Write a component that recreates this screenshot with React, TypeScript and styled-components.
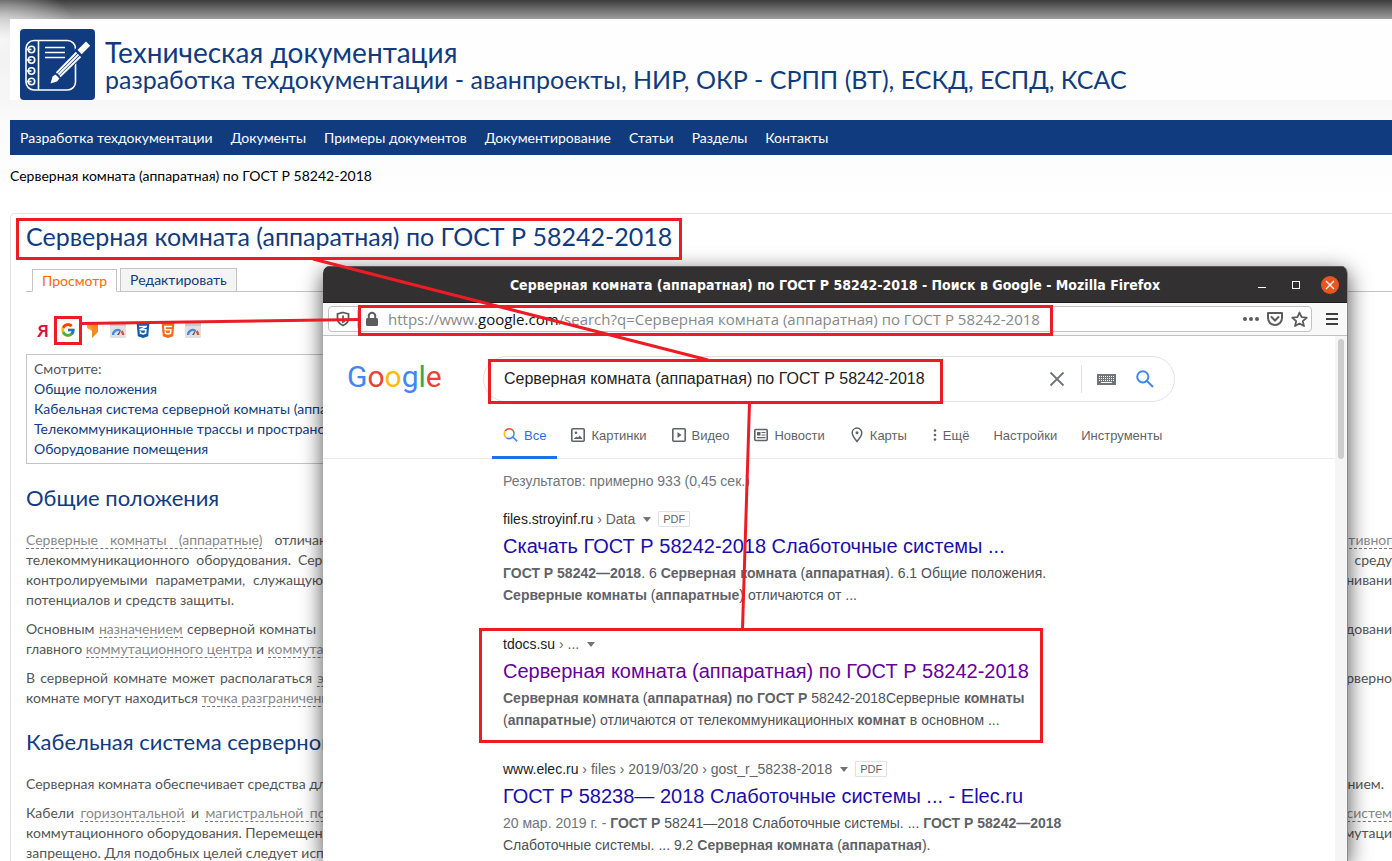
import React from 'react';
import styled, { createGlobalStyle, css } from 'styled-components';
import { FcGoogle } from 'react-icons/fc';
import { FaCss3Alt, FaHtml5 } from 'react-icons/fa';

const navy = '#113b7f';
const site = '"Trebuchet MS", Lato, "Noto Sans", sans-serif';
const arial = '"Liberation Sans", Arial, sans-serif';
const ubuntu = '"Open Sans", "Noto Sans", sans-serif';

const Global = createGlobalStyle`
  * { box-sizing: border-box; }
  body { margin: 0; background: #fff; }
  h1, h2, h3, p, ul { margin: 0; padding: 0; font-weight: 400; list-style: none; }
  a { text-decoration: none; color: inherit; }
  button { border: 0; padding: 0; background: none; font: inherit; color: inherit; display: flex; align-items: center; justify-content: center; }
  svg { display: block; }
`;

const Screen = styled.div`
  position: relative;
  height: 100vh;
  overflow: hidden;
  font-family: ${site};
  font-size: 14px;
  color: #555;
`;

/* ---------- documentation site ---------- */

const Site = styled.div`
  min-height: 100%;
  padding: 19px 0 0 10px;
  background:
    radial-gradient(ellipse 80px 60px at 0 40px, rgba(255, 255, 255, 0.8), rgba(255, 255, 255, 0)),
    linear-gradient(#3c3c3c, #9e9e9e 19px, #d8d8d8 40px, #f3f3f3 80px, #fafafa 120px, #fff 200px);
`;

const SiteHeader = styled.header`
  display: flex;
  gap: 10px;
  height: 81px;
  padding: 10px 0 0 10px;
  background: #fefefe;
`;

const SiteLogo = styled.a`
  flex: none;
  width: 75px;
  height: 71px;
  border-radius: 4px;
  background: ${navy};
`;

const SiteName = styled.div`
  padding-top: 9px;
  color: ${navy};
  white-space: nowrap;
`;

const NameTop = styled.div`
  font-size: 28px;
  line-height: 28px;
`;

const NameBottom = styled.div`
  font-size: 25px;
  line-height: 26px;
`;

const Nav = styled.nav`
  display: flex;
  align-items: center;
  gap: 18px;
  height: 35px;
  margin-top: 20px;
  padding: 0 10px;
  background: ${navy};
  color: #fff;
  white-space: nowrap;
`;

const Crumb = styled.div`
  padding: 11px 0;
  line-height: 20px;
  color: #000;
`;

const Article = styled.main`
  margin-top: 16px;
  padding: 7px 0 0 15px;
  border: 1px solid #e2e2e2;
  border-right: 0;
  border-radius: 5px 0 0 0;
`;

const Title = styled.h1`
  font-size: 25px;
  line-height: 30px;
  color: ${navy};
`;

const Tabs = styled.div`
  display: flex;
  align-items: flex-end;
  gap: 3px;
  margin-top: 17px;
  padding-left: 6px;
  border-bottom: 1px solid #c4c4c4;
`;

const Tab = styled.a<{ $active?: boolean }>`
  height: 23px;
  padding: 0 9px;
  margin-bottom: ${p => (p.$active ? '-1px' : '0')};
  border: 1px solid #c4c4c4;
  border-bottom: ${p => (p.$active ? '1px solid #fff' : '0')};
  background: ${p => (p.$active ? '#fff' : '#f4f4f4')};
  color: ${p => (p.$active ? '#ff6a00' : navy)};
  line-height: 22px;
`;

const Checkers = styled.div`
  display: flex;
  gap: 9px;
  height: 16px;
  margin-top: 30px;
  padding-left: 9px;
`;

const Checker = styled.a`
  display: flex;
  align-items: center;
  justify-content: center;
  width: 16px;
  height: 16px;
  font-size: 17px;
  font-weight: 700;
  color: #d6123c;
`;

const Contents = styled.nav`
  width: 60%;
  margin-top: 16px;
  padding: 4px 7px;
  border: 1px solid #c4c4c4;
  line-height: 20px;
  white-space: nowrap;
  a { display: block; color: ${navy}; }
`;

const Heading = styled.h2`
  margin: 19px 0 17px;
  font-size: 22px;
  line-height: 30px;
  color: ${navy};
`;

const Paragraph = styled.div`
  margin-bottom: 9px;
  line-height: 20px;
`;

const Line = styled.div`
  display: flex;
  justify-content: space-between;
  height: 20px;
  white-space: nowrap;
`;

const LineStart = styled.div<{ $width?: number }>`
  ${p => p.$width && css`
    width: ${p.$width}px;
    text-align: justify;
    text-align-last: justify;
  `}
`;

const LineEnd = styled.div<{ $inset?: boolean }>`
  padding-right: ${p => (p.$inset ? '8px' : '0')};
`;

const Term = styled.a`
  border-bottom: 1px dashed #777;
  color: #888;
`;

/* ---------- browser window ---------- */

const Win = styled.section`
  position: absolute;
  top: 266px;
  left: 323px;
  right: 44px;
  bottom: 0;
  display: flex;
  flex-direction: column;
  border-right: 1px solid #8a8a8a;
  border-radius: 7px 7px 0 0;
  background: #fff;
  box-shadow: 0 6px 22px rgba(0, 0, 0, 0.7);
  overflow: hidden;
`;

const TitleBar = styled.header`
  display: grid;
  grid-template-columns: 1fr auto 1fr;
  align-items: center;
  flex: none;
  height: 37px;
  border-top: 1px solid #5a5858;
  border-bottom: 1px solid #1d1a1c;
  background: #333031;
  color: #fff;
  font: 700 14px "DejaVu Sans Condensed", ${ubuntu};
`;

const WinTitle = styled.span`
  grid-column: 2;
  white-space: nowrap;
`;

const WinButtons = styled.div`
  display: flex;
  justify-content: flex-end;
  align-items: center;
  gap: 16px;
  padding-right: 8px;
`;

const CloseButton = styled.button`
  width: 18px;
  height: 18px;
  border-radius: 9px;
  background: #e95420;
`;

const Toolbar = styled.div`
  display: flex;
  align-items: center;
  flex: none;
  height: 33px;
  padding: 0 9px 0 5px;
  gap: 14px;
  border-bottom: 1px solid #c2c2c2;
  background: #f8f8f8;
`;

const Address = styled.div`
  display: flex;
  align-items: center;
  flex: 1;
  height: 26px;
  padding: 0 3px 0 7px;
  border: 1px solid #c2c2c2;
  border-radius: 4px;
  background: #fff;
  color: #888;
`;

const Rule = styled.i`
  width: 1px;
  height: 18px;
  margin: 0 7px;
  background: #ccc;
`;

const Url = styled.div`
  flex: 1;
  margin-left: 9px;
  font: 15px ${ubuntu};
  white-space: nowrap;
  b { font-weight: 400; color: #111; }
`;

const AddressActions = styled.div`
  display: flex;
  gap: 8px;
`;

const Viewport = styled.div`
  display: flex;
  flex: 1;
  min-height: 0;
  overflow: hidden;
  font-family: ${arial};
`;

const Page = styled.div`
  flex: 1;
  min-width: 0;
`;

const Scrollbar = styled.div`
  flex: none;
  width: 12px;
  padding: 3px;
  background: #f5f5f5;
  &::before {
    content: '';
    display: block;
    height: 120px;
    border-radius: 3px;
    background: #cdcdcd;
  }
`;

const SearchHead = styled.header`
  display: flex;
  align-items: flex-start;
  padding: 20px 0 0 24px;
`;

const Wordmark = styled.a`
  flex: none;
  width: 136px;
  padding-top: 3px;
  font: 400 30px/36px Roboto, sans-serif;
`;

const Letter = styled.span<{ $c: string }>`
  color: ${p => p.$c};
`;

const SearchBox = styled.form`
  display: flex;
  align-items: center;
  width: 692px;
  height: 46px;
  padding: 0 20px;
  border: 1px solid #dfe1e5;
  border-radius: 23px;
`;

const Query = styled.input`
  flex: 1;
  min-width: 0;
  padding: 0;
  border: 0;
  outline: 0;
  background: none;
  color: #222;
  font: 16px ${arial};
`;

const SearchRule = styled.i`
  width: 1px;
  height: 28px;
  margin: 0 15px 0 16px;
  background: #dfe1e5;
`;

const SearchIcons = styled.div`
  display: flex;
  gap: 20px;
`;

const Filters = styled.nav`
  display: flex;
  gap: 2px;
  height: 57px;
  padding: 10px 0 0 169px;
  border-bottom: 1px solid #ebebeb;
`;

const Filter = styled.a<{ $active?: boolean }>`
  display: flex;
  align-items: center;
  gap: 5px;
  height: 47px;
  padding: 2px 11px 0;
  border-bottom: 3px solid ${p => (p.$active ? '#1a73e8' : 'transparent')};
  color: ${p => (p.$active ? '#1a73e8' : '#5f6368')};
  font-size: 13px;
  white-space: nowrap;
`;

const Results = styled.div`
  padding-left: 180px;
  white-space: nowrap;
`;

const Stats = styled.div`
  padding: 12px 0 17px;
  line-height: 20px;
  color: #70757a;
`;

const Result = styled.article`
  margin-bottom: 27px;
`;

const Cite = styled.div`
  display: flex;
  align-items: center;
  height: 22px;
  color: #5f6368;
  b { font-weight: 400; color: #202124; }
`;

const Caret = styled.i`
  margin: 0 7px 0 8px;
  border: 4px solid transparent;
  border-top: 5px solid #70757a;
  border-bottom: 0;
`;

const Badge = styled.span`
  padding: 0 4px;
  border: 1px solid #dfe1e5;
  border-radius: 1px;
  color: #5f6368;
  font-size: 11px;
  line-height: 14px;
`;

const ResultTitle = styled.h3<{ $visited?: boolean }>`
  font-size: 20px;
  line-height: 32px;
  color: ${p => (p.$visited ? '#660099' : '#1a0dab')};
`;

const Snippet = styled.p`
  line-height: 22px;
  color: #4d5156;
  b { color: #5f6368; }
`;

const Muted = styled.span`
  color: #70757a;
`;

/* ---------- red annotations ---------- */

const Marks = styled.svg`
  position: absolute;
  top: 0;
  left: 0;
  width: 100%;
  height: 100%;
  pointer-events: none;
  fill: none;
  stroke: #ed1c24;
  stroke-width: 3;
`;

/* ---------- icons ---------- */

const NotebookIcon = () => (
  <svg width="75" height="71" viewBox="0 0 75 71" fill="none" stroke="#fff" strokeWidth="1.6">
    <rect x="6" y="11.500" width="49.500" height="49.500" rx="8" />
    <path d="M18.500 11.500v49.500" />
    <path d="M25 18.500h20M25 23.500h20M25 28.500h20" />
    {[20.5, 31, 42, 52.5].map(y => (
      <g key={y}>
        <circle cx="11.500" cy={y} r="4.600" fill={navy} stroke="none" />
        <circle cx="11.500" cy={y} r="3.200" />
        <path d={`M6.500 ${y}h5`} />
      </g>
    ))}
    <path d="M60 17l5-4.500 5 4.500-5.500 6.500L38.500 50.500 31 54l1.500-8z" fill={navy} stroke={navy} strokeWidth="3" />
    <path d="M57.500 21l8.500-8.500 4.200 4.200-8.500 8.500z" fill="#fff" stroke="none" />
    <path d="M56.500 23.500L36.500 44M60.500 27.500L40 47.500M58.500 25.500L38.500 45.500" strokeWidth="1.800" />
    <path d="M35.500 45.500l4 4-2.500 3-6.500 2 2-7z" fill="#fff" stroke="none" />
  </svg>
);

const GaugeIcon = () => (
  <svg width="16" height="16" viewBox="0 0 16 16" fill="none">
    <rect width="16" height="16" rx="1" fill="#e1e1e1" />
    <rect width="16" height="4" fill="#c9c9c9" />
    <path d="M3 13a5 5 0 0 1 7-4.700" stroke="#4285f4" strokeWidth="2.400" />
    <path d="M11.500 9.200A5 5 0 0 1 13.200 13" stroke="#e04a3f" strokeWidth="2.400" />
    <path d="M7 13l3.500-5 .5.5L9 13z" fill="#555" />
  </svg>
);

const OrangeIcon = () => (
  <svg width="16" height="16" viewBox="0 0 16 16">
    <path d="M2 2l7 3v5L2 6z" fill="#f9a13a" />
    <path d="M2 2l11-1v9l-6 6V6z" fill="#f28c1e" />
  </svg>
);

const ShieldIcon = () => (
  <svg width="14" height="16" viewBox="0 0 14 16" fill="none" stroke="#5c5c5c" strokeWidth="1.800">
    <path d="M7 1.500L12.500 3v4.500c0 3-2 5.500-5.500 7-3.500-1.500-5.500-4-5.500-7V3z" />
    <path d="M7 4.500v6.500c1.800-.8 2.500-2 2.500-3.500" />
  </svg>
);

const LockIcon = () => (
  <svg width="14" height="16" viewBox="0 0 14 16" fill="none">
    <rect x="1" y="7" width="12" height="8" rx="1.500" fill="#5c5c5c" />
    <path d="M3.800 8V5a3.200 3.200 0 0 1 6.400 0v3" stroke="#5c5c5c" strokeWidth="2" />
  </svg>
);

const ClearIcon = () => (
  <svg width="16" height="16" viewBox="0 0 16 16" stroke="#70757a" strokeWidth="1.800">
    <path d="M1.500 1.500l13 13M14.500 1.500l-13 13" />
  </svg>
);

const KeyboardIcon = () => (
  <svg width="19" height="16" viewBox="0 0 19 16">
    <rect y="3" width="19" height="11" fill="#70757a" />
    <path d="M2 5.500h15M2 7.500h15M2 9.500h15" stroke="#fff" strokeWidth="1" strokeDasharray="1 1" />
    <path d="M4 11.500h11" stroke="#fff" />
  </svg>
);

const Magnifier = () => (
  <svg width="18" height="18" viewBox="0 0 18 18" fill="none" stroke="#4285f4" strokeWidth="2">
    <circle cx="6.800" cy="6.800" r="5.600" />
    <path d="M11 11l6 6" />
  </svg>
);

const ColorMagnifier = () => (
  <svg width="16" height="16" viewBox="0 0 16 16" fill="none" strokeWidth="1.600">
    <path d="M2.200 4A5 5 0 0 1 9.900 3.200" stroke="#ea4335" />
    <path d="M9.900 3.200A5 5 0 0 1 10.900 8" stroke="#34a853" />
    <path d="M2.200 4A5 5 0 0 0 3.400 10.800" stroke="#fbbc05" />
    <path d="M3.400 10.800A5 5 0 0 0 10.900 8M9.800 10l4.400 4.400" stroke="#4285f4" />
  </svg>
);

const Frame = ({ children }: { children: React.ReactNode }) => (
  <svg width="16" height="16" viewBox="0 0 16 16" fill="none" stroke="#5f6368" strokeWidth="1.600">
    <rect x="1.800" y="1.800" width="12.400" height="12.400" rx="1" />
    {children}
  </svg>
);

const ImageIcon = () => (
  <Frame>
    <path d="M3.500 12h9l-2.700-3.500L8 10.500 6.500 9.500z" fill="#5f6368" stroke="none" />
    <circle cx="6" cy="5.800" r="1.300" fill="#5f6368" stroke="none" />
  </Frame>
);
const VideoIcon = () => (
  <Frame><path d="M6.500 5v6l4-3z" fill="#5f6368" stroke="none" /></Frame>
);
const NewsIcon = () => (
  <svg width="16" height="16" viewBox="0 0 16 16" fill="none" stroke="#5f6368" strokeWidth="1.600">
    <rect x="1.800" y="2.500" width="12.400" height="11" rx="1" />
    <rect x="4" y="5" width="3.500" height="3.500" fill="#5f6368" stroke="none" />
    <path d="M8.500 5.500h4M8.500 8h4M4 10.700h8.500" strokeWidth="1.200" />
  </svg>
);
const PinIcon = () => (
  <svg width="16" height="16" viewBox="0 0 16 16" fill="none" stroke="#5f6368" strokeWidth="1.500">
    <path d="M8 14.500C5 11 3.200 8.500 3.200 5.800a4.800 4.800 0 0 1 9.600 0C12.800 8.500 11 11 8 14.500z" />
    <circle cx="8" cy="5.800" r="1.500" fill="#5f6368" stroke="none" />
  </svg>
);
const MoreIcon = () => (
  <svg width="7" height="16" viewBox="0 0 7 16" fill="#5f6368">
    <circle cx="4" cy="3.500" r="1.300" /><circle cx="4" cy="8" r="1.300" /><circle cx="4" cy="12.500" r="1.300" />
  </svg>
);

const filters: { label: string; icon?: React.ReactNode; active?: boolean }[] = [
  { label: 'Все', icon: <ColorMagnifier />, active: true },
  { label: 'Картинки', icon: <ImageIcon /> },
  { label: 'Видео', icon: <VideoIcon /> },
  { label: 'Новости', icon: <NewsIcon /> },
  { label: 'Карты', icon: <PinIcon /> },
  { label: 'Ещё', icon: <MoreIcon /> },
  { label: 'Настройки' },
  { label: 'Инструменты' },
];

const letters: [string, string][] = [
  ['G', '#4285f4'], ['o', '#ea4335'], ['o', '#fbbc05'], ['g', '#4285f4'], ['l', '#34a853'], ['e', '#ea4335'],
];

const SitePage = () => (
  <Site>
    <SiteHeader>
      <SiteLogo href="#" aria-label="Техническая документация"><NotebookIcon /></SiteLogo>
      <SiteName>
        <NameTop>Техническая документация</NameTop>
        <NameBottom>разработка техдокументации - аванпроекты, НИР, ОКР - СРПП (ВТ), ЕСКД, ЕСПД, КСАС</NameBottom>
      </SiteName>
    </SiteHeader>
    <Nav>
      {['Разработка техдокументации', 'Документы', 'Примеры документов', 'Документирование', 'Статьи', 'Разделы', 'Контакты'].map(t => (
        <a href="#" key={t}>{t}</a>
      ))}
    </Nav>
    <Crumb>Серверная комната (аппаратная) по ГОСТ Р 58242-2018</Crumb>
    <Article>
      <Title>Серверная комната (аппаратная) по ГОСТ Р 58242-2018</Title>
      <Tabs>
        <Tab href="#" $active>Просмотр</Tab>
        <Tab href="#">Редактировать</Tab>
      </Tabs>
      <Checkers>
        <Checker href="#">Я</Checker>
        <Checker href="#" aria-label="Google"><FcGoogle size={18} /></Checker>
        <Checker href="#" aria-label="Хостинг"><OrangeIcon /></Checker>
        <Checker href="#" aria-label="PageSpeed"><GaugeIcon /></Checker>
        <Checker href="#" aria-label="CSS"><FaCss3Alt size={17} color="#0f5fa8" /></Checker>
        <Checker href="#" aria-label="HTML"><FaHtml5 size={17} color="#ee6a22" /></Checker>
        <Checker href="#" aria-label="PageSpeed"><GaugeIcon /></Checker>
      </Checkers>
      <Contents>
        Смотрите:
        <a href="#">Общие положения</a>
        <a href="#">Кабельная система серверной комнаты (аппаратной)</a>
        <a href="#">Телекоммуникационные трассы и пространства</a>
        <a href="#">Оборудование помещения</a>
      </Contents>
      <Heading>Общие положения</Heading>
      <Paragraph>
        <Line>
          <LineStart $width={324}><Term href="#">Серверные комнаты (аппаратные)</Term> отличаются</LineStart>
          <LineEnd><Term href="#">активног</Term></LineEnd>
        </Line>
        <Line>
          <LineStart $width={344}>телекоммуникационного оборудования. Серверные</LineStart>
          <LineEnd>среду</LineEnd>
        </Line>
        <Line>
          <LineStart $width={297}>контролируемыми параметрами, служащую</LineStart>
          <LineEnd>внивани</LineEnd>
        </Line>
        <Line><LineStart>потенциалов и средств защиты.</LineStart></Line>
      </Paragraph>
      <Paragraph>
        <Line>
          <LineStart $width={290}>Основным <Term href="#">назначением</Term> серверной комнаты</LineStart>
          <LineEnd>удовани</LineEnd>
        </Line>
        <Line>
          <LineStart>главного <Term href="#">коммутационного центра</Term> и <Term href="#">коммутационного</Term></LineStart>
        </Line>
      </Paragraph>
      <Paragraph>
        <Line>
          <LineStart $width={298}>В серверной комнате может располагаться <Term href="#">э</Term></LineStart>
          <LineEnd>серверно</LineEnd>
        </Line>
        <Line>
          <LineStart>комнате могут находиться <Term href="#">точка разграничения</Term></LineStart>
        </Line>
      </Paragraph>
      <Heading>Кабельная система серверной комнаты</Heading>
      <Paragraph>
        <Line>
          <LineStart>Серверная комната обеспечивает средства для</LineStart>
          <LineEnd $inset>нием.</LineEnd>
        </Line>
      </Paragraph>
      <Paragraph>
        <Line>
          <LineStart $width={308}>Кабели <Term href="#">горизонтальной</Term> и <Term href="#">магистральной под</Term></LineStart>
          <LineEnd><Term href="#">систем</Term></LineEnd>
        </Line>
        <Line>
          <LineStart $width={304}>коммутационного оборудования. Перемещение</LineStart>
          <LineEnd>ммутаци</LineEnd>
        </Line>
        <Line><LineStart>запрещено. Для подобных целей следует использовать</LineStart></Line>
      </Paragraph>
    </Article>
  </Site>
);

const Firefox = () => (
  <Win>
    <TitleBar>
      <WinTitle>Серверная комната (аппаратная) по ГОСТ Р 58242-2018 - Поиск в Google - Mozilla Firefox</WinTitle>
      <WinButtons>
        <button aria-label="Свернуть">
          <svg width="18" height="18" stroke="#fff"><path d="M5 11.500h8" /></svg>
        </button>
        <button aria-label="Развернуть">
          <svg width="18" height="18" stroke="#fff" fill="none"><rect x="5.500" y="5.500" width="7" height="7" /></svg>
        </button>
        <CloseButton aria-label="Закрыть">
          <svg width="18" height="18" stroke="#fff" strokeWidth="1.200"><path d="M5 5l8 8M13 5l-8 8" /></svg>
        </CloseButton>
      </WinButtons>
    </TitleBar>
    <Toolbar>
      <Address>
        <button aria-label="Защита"><ShieldIcon /></button>
        <Rule />
        <button aria-label="Соединение защищено"><LockIcon /></button>
        <Url role="textbox" aria-label="Адрес">
          https://www.<b>google.com</b>/search?q=Серверная комната (аппаратная) по ГОСТ Р 58242-2018
        </Url>
        <AddressActions>
          <button aria-label="Действия">
            <svg width="16" height="16" fill="#5c5c5c"><circle cx="2" cy="8" r="2" /><circle cx="8" cy="8" r="2" /><circle cx="14" cy="8" r="2" /></svg>
          </button>
          <button aria-label="Pocket">
            <svg width="16" height="16" fill="none" stroke="#5c5c5c" strokeWidth="2">
              <path d="M1 2h14v5a7 7 0 0 1-14 0z" strokeLinejoin="round" /><path d="M4.500 6L8 9.500 11.500 6" strokeLinecap="round" />
            </svg>
          </button>
          <button aria-label="Закладка">
            <svg width="17" height="17" viewBox="0 0 17 17" fill="none" stroke="#5c5c5c" strokeWidth="1.800" strokeLinejoin="round">
              <path d="M8.500 1.500l2.100 4.700 5.100.5-3.900 3.400 1.200 5-4.500-2.700L4 15.100l1.200-5L1.300 6.700l5.100-.5z" />
            </svg>
          </button>
        </AddressActions>
      </Address>
      <button aria-label="Меню">
        <svg width="12" height="14" stroke="#3d3d3d" strokeWidth="2"><path d="M0 2h12M0 7h12M0 12h12" /></svg>
      </button>
    </Toolbar>
    <Viewport>
      <Page>
        <SearchHead>
          <Wordmark href="#" aria-label="Google">
            {letters.map(([l, c], i) => <Letter key={i} $c={c}>{l}</Letter>)}
          </Wordmark>
          <SearchBox onSubmit={e => e.preventDefault()}>
            <Query aria-label="Поиск" defaultValue="Серверная комната (аппаратная) по ГОСТ Р 58242-2018" />
            <button type="button" aria-label="Очистить"><ClearIcon /></button>
            <SearchRule />
            <SearchIcons>
              <button type="button" aria-label="Клавиатура"><KeyboardIcon /></button>
              <button aria-label="Найти"><Magnifier /></button>
            </SearchIcons>
          </SearchBox>
        </SearchHead>
        <Filters>
          {filters.map(f => <Filter key={f.label} href="#" $active={f.active}>{f.icon}{f.label}</Filter>)}
        </Filters>
        <Results>
          <Stats>Результатов: примерно 933 (0,45 сек.)</Stats>
          <Result>
            <Cite><span><b>files.stroyinf.ru</b> › Data</span><Caret /><Badge>PDF</Badge></Cite>
            <ResultTitle><a href="#">Скачать ГОСТ Р 58242-2018 Слаботочные системы ...</a></ResultTitle>
            <Snippet>
              <b>ГОСТ Р 58242—2018</b>. 6 <b>Серверная комната</b> (<b>аппаратная</b>). 6.1 Общие положения.<br />
              <b>Серверные комнаты</b> (<b>аппаратные</b>) отличаются от ...
            </Snippet>
          </Result>
          <Result>
            <Cite><span><b>tdocs.su</b> › ...</span><Caret /></Cite>
            <ResultTitle $visited><a href="#">Серверная комната (аппаратная) по ГОСТ Р 58242-2018</a></ResultTitle>
            <Snippet>
              <b>Серверная комната</b> (<b>аппаратная) по ГОСТ Р</b> 58242-2018Серверные <b>комнаты</b><br />
              (<b>аппаратные</b>) отличаются от телекоммуникационных <b>комнат</b> в основном ...
            </Snippet>
          </Result>
          <Result>
            <Cite><span><b>www.elec.ru</b> › files › 2019/03/20 › gost_r_58238-2018</span><Caret /><Badge>PDF</Badge></Cite>
            <ResultTitle><a href="#">ГОСТ Р 58238— 2018 Слаботочные системы ... - Elec.ru</a></ResultTitle>
            <Snippet>
              <Muted>20 мар. 2019 г. - </Muted><b>ГОСТ Р</b> 58241—2018 Слаботочные системы. ... <b>ГОСТ Р 58242—2018</b><br />
              Слаботочные системы. ... 9.2 <b>Серверная комната</b> (<b>аппаратная</b>).
            </Snippet>
          </Result>
        </Results>
      </Page>
      <Scrollbar />
    </Viewport>
  </Win>
);

export default function App() {
  return (
    <Screen>
      <Global />
      <SitePage />
      <Firefox />
      <Marks aria-hidden="true">
        <rect x="17.500" y="219.500" width="663" height="39" />
        <rect x="55.500" y="317.500" width="25" height="26" />
        <rect x="359.500" y="306.500" width="692" height="28" />
        <rect x="489.500" y="360.500" width="452" height="42" />
        <rect x="480.500" y="629.500" width="561" height="112" />
        <path d="M313 259L708 360M82 323.500L359 319.500M749.500 403L742.500 629" />
      </Marks>
    </Screen>
  );
}
